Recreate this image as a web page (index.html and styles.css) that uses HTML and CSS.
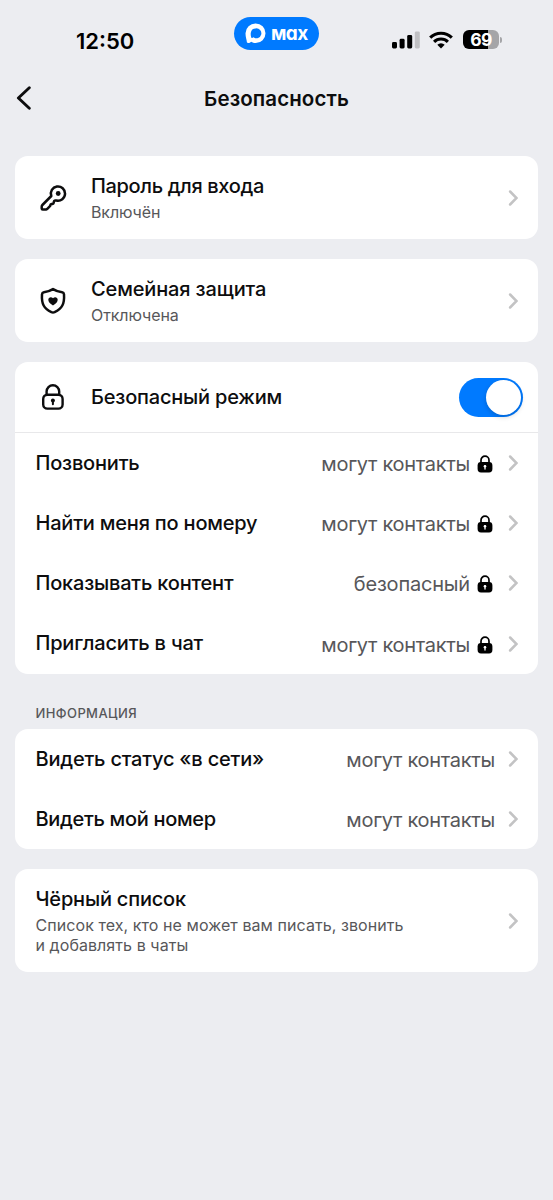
FILE: index.html
```html
<!DOCTYPE html>
<html lang="ru">
<head>
<meta charset="utf-8">
<title>Безопасность</title>
<link rel="stylesheet" href="styles.css">
</head>
<body>
<svg class="sprite" aria-hidden="true">
  <symbol id="chevron" viewBox="0 0 10 16"><path d="M2.100 1.500 8.500 8 2.100 14.500" fill="none" stroke="#c3c3c4" stroke-width="2.500" stroke-linecap="round" stroke-linejoin="miter"/></symbol>
  <symbol id="lock-solid" viewBox="0 0 16 18"><path d="M4 9V5.200a4 4 0 0 1 8 0V9" fill="none" stroke="#000" stroke-width="1.700"/><rect x=".6" y="7" width="14.800" height="10.400" rx="3.400" fill="#000"/><circle cx="8" cy="11.200" r="1.300" fill="#fff"/><path d="M8 11v3" stroke="#fff" stroke-width="1.300" stroke-linecap="round"/></symbol>
</svg>
<div class="screen">
  <header class="status">
    <time class="clock">12:50</time>
    <div class="pill">
      <svg class="pill-logo" viewBox="0 0 21 21"><path fill="#fff" fill-rule="evenodd" d="M10.7.5a9.800 9.800 0 1 1 0 19.600c-2 0-3-.4-4.600-1.300C5 20.200 2.200 20.600 1.900 19.300 1.700 16.500.5 14.300.5 10.300A10 10 0 0 1 10.700.5Zm0 4.900a5 5 0 0 0-4.900 4.300c-.3 1.900.1 4.700.8 5.200.5.300 1.300-.200 1.900-.600A4.950 4.950 0 1 0 10.700 5.400Z"/></svg>
      <span class="pill-text">мax</span>
    </div>
    <div class="indicators">
      <svg class="signal" viewBox="0 0 28 18"><rect x="0" y="11" width="5" height="6.500" rx="1.400"/><rect x="7.600" y="7.800" width="5" height="9.700" rx="1.400"/><rect x="15.200" y="4" width="5" height="13.500" rx="1.400"/><rect x="22.800" y=".4" width="5" height="17.100" rx="1.400" fill="#c0c0c3"/></svg>
      <svg class="wifi" viewBox="0 0 24 18"><g fill="none" stroke="#000" stroke-width="3.100"><path d="M1.200 6.700a15.300 15.300 0 0 1 21.600 0"/><path d="M5.100 10.800a9.800 9.800 0 0 1 13.800 0"/></g><path d="M12 17.500 8.300 13.800a5.300 5.300 0 0 1 7.400 0Z"/></svg>
      <div class="battery"><span class="battery-body">69</span><span class="battery-tip"></span></div>
    </div>
  </header>
  <nav class="nav">
    <svg class="back" viewBox="0 0 16 24"><path d="M13.300 1.700 2.400 12l10.900 10.300" fill="none" stroke="#0d0d0e" stroke-width="2.900" stroke-linecap="round" stroke-linejoin="round"/></svg>
    <h1 class="heading">Безопасность</h1>
  </nav>
  <main class="content">
    <section class="card entry">
      <svg class="icon" viewBox="0 0 28 28"><path d="M12.300 12A7.100 7.100 0 1 1 17.400 16.500L16.100 16.600C15.200 16.700 14.900 17.200 14.800 18L14.700 18.700C14.600 19.400 14.200 19.800 13.500 19.900L12.500 20C11.800 20.100 11.400 20.500 11.300 21.200L11.200 21.900 8.300 24.800C8 25.200 7.600 25.300 7.100 25.400L3.700 25.600C3 25.600 2.700 25.200 2.700 24.600V22.700C2.700 22 2.900 21.500 3.400 21Z" fill="none" stroke="#0d0d0e" stroke-width="2.500" stroke-linejoin="round"/><circle cx="19.200" cy="9.500" r="2.400" fill="#0d0d0e"/></svg>
      <div class="entry-text"><div class="title t-password">Пароль для входа</div><div class="note n-on">Включён</div></div>
      <svg class="chevron"><use href="#chevron"/></svg>
    </section>
    <section class="card entry">
      <svg class="icon" viewBox="0 0 28 28"><path d="M14 2.100c2.800 1.700 6 2.800 9.100 3.200 1.300.2 1.800.8 1.900 2 .6 9.600-1.900 14.200-9.400 17.900-1.100.5-2.100.5-3.200 0C4.900 21.500 2.400 16.900 3 7.300c.1-1.200.6-1.800 1.900-2C8 4.900 11.200 3.800 14 2.100Z" fill="none" stroke="#0d0d0e" stroke-width="2.500" stroke-linejoin="round"/><path d="M14 18.600c-3.100-2.100-4.700-3.900-4.700-5.900 0-2.600 3.100-3.500 4.700-1.400 1.600-2.100 4.700-1.200 4.700 1.400 0 2-1.600 3.800-4.700 5.900Z" fill="#0d0d0e"/></svg>
      <div class="entry-text"><div class="title t-family">Семейная защита</div><div class="note n-off">Отключена</div></div>
      <svg class="chevron"><use href="#chevron"/></svg>
    </section>
    <section class="card">
      <div class="mode">
        <svg class="icon" viewBox="0 0 28 28"><g fill="none" stroke="#0d0d0e" stroke-width="2.400"><rect x="4.200" y="11.700" width="19.400" height="13.900" rx="4.200"/><path d="M7.600 12.500V8.600a6.300 6.300 0 0 1 12.600 0v3.900"/></g><circle cx="13.900" cy="17.500" r="2" fill="#0d0d0e"/><path d="M13.900 18v3.300" stroke="#0d0d0e" stroke-width="2" stroke-linecap="round"/></svg>
        <div class="title">Безопасный режим</div>
        <div class="switch"><span class="knob"></span></div>
      </div>
      <div class="row"><span class="title">Позвонить</span><span class="value">могут контакты</span><svg class="lock"><use href="#lock-solid"/></svg><svg class="chevron"><use href="#chevron"/></svg></div>
      <div class="row"><span class="title">Найти меня по номеру</span><span class="value">могут контакты</span><svg class="lock"><use href="#lock-solid"/></svg><svg class="chevron"><use href="#chevron"/></svg></div>
      <div class="row"><span class="title">Показывать контент</span><span class="value v-safe">безопасный</span><svg class="lock"><use href="#lock-solid"/></svg><svg class="chevron"><use href="#chevron"/></svg></div>
      <div class="row"><span class="title">Пригласить в чат</span><span class="value">могут контакты</span><svg class="lock"><use href="#lock-solid"/></svg><svg class="chevron"><use href="#chevron"/></svg></div>
    </section>
    <h2 class="label">ИНФОРМАЦИЯ</h2>
    <section class="card">
      <div class="row"><span class="title">Видеть статус «в сети»</span><span class="value">могут контакты</span><svg class="chevron"><use href="#chevron"/></svg></div>
      <div class="row"><span class="title t-number">Видеть мой номер</span><span class="value">могут контакты</span><svg class="chevron"><use href="#chevron"/></svg></div>
    </section>
    <section class="card blacklist">
      <div class="entry-text"><div class="title">Чёрный список</div><div class="note n-black">Список тех, кто не может вам писать, звонить<br>и добавлять в чаты</div></div>
      <svg class="chevron"><use href="#chevron"/></svg>
    </section>
  </main>
</div>
</body>
</html>
```

FILE: styles.css
```css
* { box-sizing: border-box; }
body { margin: 0; background: #ecedf1; color: #0d0d0e; font-family: Inter, "Liberation Sans", sans-serif; }
svg { display: block; flex: none; }
.sprite { width: 0; height: 0; position: absolute; }
.screen { width: 553px; height: 1200px; overflow: hidden; background: #ecedf1; }

.status { height: 66px; display: grid; grid-template-columns: 234px 85px 1fr; align-items: start; padding-top: 17px; }
.clock { padding: 10px 0 0 76px; font-size: 22px; line-height: 28px; font-weight: 600; color: #000; }
.pill { height: 33px; border-radius: 17px; background: #007aff; display: flex; align-items: center; padding-left: 11px; gap: 5px; }
.pill-logo { width: 21px; height: 21px; }
.pill-text { color: #fff; font-size: 19px; line-height: 30px; font-weight: 700; letter-spacing: -.6px; font-feature-settings: "cv11"; }
.indicators { display: flex; align-items: center; padding: 13px 0 0 73px; }
.signal { width: 28px; height: 18px; }
.wifi { width: 24px; height: 18px; margin-left: 9px; }
.battery { display: flex; align-items: center; gap: 1px; margin-left: 10px; }
.battery-body { width: 36px; height: 19px; border-radius: 6px; background: linear-gradient(90deg, #000 70%, #a5a5a8 70%); color: #fff; font-size: 17.500px; line-height: 20px; font-weight: 700; letter-spacing: -.5px; text-align: center; }
.battery-tip { width: 2px; height: 6px; border-radius: 0 2px 2px 0; background: #a5a5a8; }

.nav { height: 64px; display: grid; grid-template-columns: 44px 1fr 44px; align-items: center; }
.back { width: 16px; height: 24px; margin-left: 16px; }
.heading { margin: 2px 0 0; font-size: 20.500px; line-height: 28px; font-weight: 600; letter-spacing: .1px; text-align: center; }

.content { padding: 26px 15px 0; display: flex; flex-direction: column; }
.card { background: #fff; border-radius: 13px; margin-bottom: 20px; }
.entry { height: 83px; display: flex; align-items: center; padding: 0 20px 0 24px; }
.icon { width: 28px; height: 28px; margin-right: 24px; }
.entry-text { flex: 1; }
.title { font-size: 20px; line-height: 28px; font-weight: 500; letter-spacing: -.2px; white-space: nowrap; }
.t-password { letter-spacing: -.35px; }
.t-family { letter-spacing: -.14px; }
.t-number { letter-spacing: -.32px; }
.note { font-size: 16px; line-height: 20px; color: #57575a; margin: 2px 0 1px; white-space: nowrap; }
.n-on { letter-spacing: -.1px; }
.n-off { letter-spacing: -.08px; }
.n-black { letter-spacing: .07px; }
.chevron { width: 10px; height: 16px; }

.mode { height: 71px; display: flex; align-items: center; padding: 0 15px 0 24px; border-bottom: 1px solid #e8e8ea; }
.switch { margin-left: auto; width: 64px; height: 39px; border-radius: 20px; background: #007aff; padding: 2px; display: flex; justify-content: flex-end; align-items: center; }
.knob { width: 35px; height: 35px; border-radius: 50%; background: #fff; box-shadow: 0 2px 5px rgba(0, 0, 0, .18); }
.row { height: 60.200px; display: flex; align-items: center; padding: 0 20px 0 20.500px; }
.row .title { margin-top: -.6px; }
.value { margin: 2px 0 0 auto; font-size: 20px; line-height: 28px; letter-spacing: -.3px; color: #57575a; white-space: nowrap; }
.v-safe { letter-spacing: -.2px; }
.lock { width: 16px; height: 18px; margin: 2px 0 0 7px; }
.row .chevron { margin-left: 15px; }
.row .value + .chevron { margin-left: 13px; }
.label { margin: 12px 0 8px 20.500px; font-size: 13px; line-height: 15px; font-weight: 500; letter-spacing: .4px; color: #57575a; }
.blacklist { height: 103px; display: flex; align-items: center; padding: 0 20px 0 20.500px; }
```
